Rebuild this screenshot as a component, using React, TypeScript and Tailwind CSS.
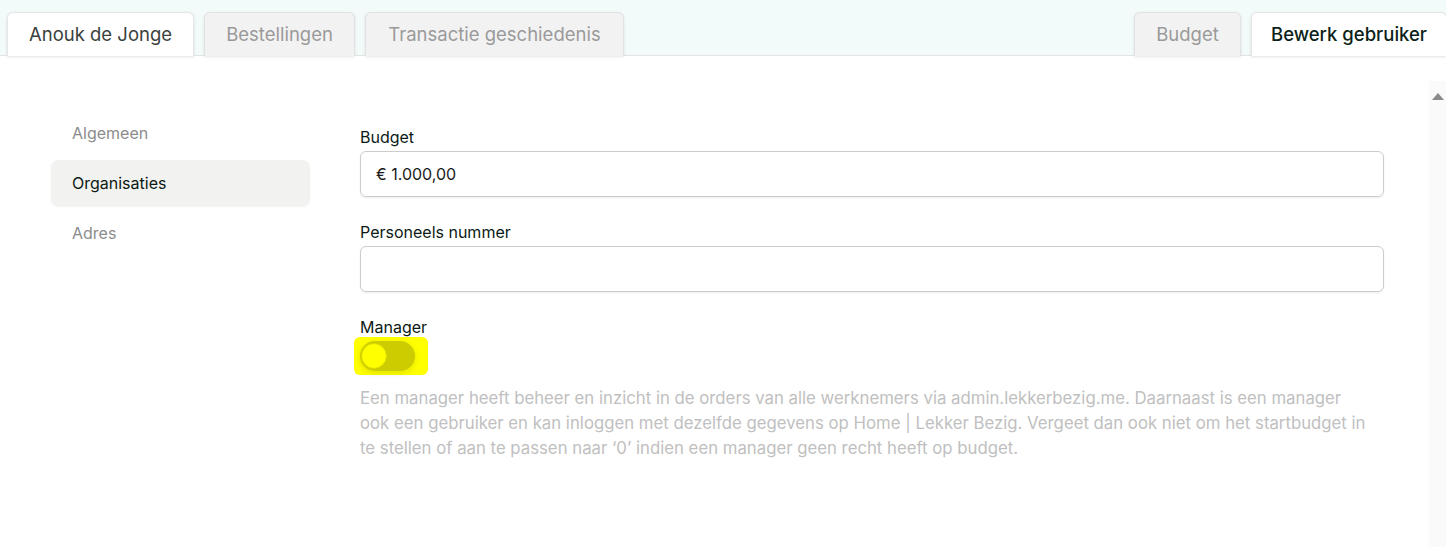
import React from "react";

const font = { fontFamily: "Inter, 'Noto Sans', sans-serif" };

function Tab({ label, active }: { label: string; active?: boolean }) {
  return (
    <div
      className={
        "h-[44px] flex items-center justify-center rounded-t-[6px] border border-b-0 text-[18.5px] -mb-px " +
        (active
          ? "bg-white border-[#e6e6e6] shadow-[0_1px_3px_rgba(0,0,0,0.12)]"
          : "bg-[#f2f2f2] border-[#e2e2e2] text-[#9a9a9a] shadow-[0_1px_3px_rgba(0,0,0,0.10)]")
      }
    >
      {label}
    </div>
  );
}

const lines = [
  "Een manager heeft beheer en inzicht in de orders van alle werknemers via admin.lekkerbezig.me. Daarnaast is een manager",
  "ook een gebruiker en kan inloggen met dezelfde gegevens op Home | Lekker Bezig. Vergeet dan ook niet om het startbudget in",
  "te stellen of aan te passen naar ‘0’ indien een manager geen recht heeft op budget.",
];

export default function App() {
  return (
    <div className="w-[1446px] h-[547px] bg-white overflow-hidden" style={font}>
      <div className="h-[56px] bg-[#f3fbfa] border-b border-[#e4e4e4] flex items-end justify-between pl-[7px]">
        <div className="flex gap-[10px]">
          <div className="w-[187px] text-[#3a3f3d]">
            <Tab label="Anouk de Jonge" active />
          </div>
          <div className="w-[151px]">
            <Tab label="Bestellingen" />
          </div>
          <div className="w-[259px]">
            <Tab label="Transactie geschiedenis" />
          </div>
        </div>
        <div className="flex gap-[10px] -mr-[1px]">
          <div className="w-[107px]">
            <Tab label="Budget" />
          </div>
          <div className="w-[196px] text-[#0c1f18] font-medium">
            <Tab label="Bewerk gebruiker" active />
          </div>
        </div>
      </div>
      <div className="flex h-[491px]">
        <div className="w-[310px] shrink-0 pl-[51px] pt-[54px] flex flex-col gap-[4px] text-[16px]">
          <div className="h-[46px] flex items-center pl-[21px] text-[#8c8c8c]">Algemeen</div>
          <div className="h-[46px] flex items-center pl-[21px] text-[#0b1a14] bg-[#f2f2f0] rounded-[8px] shadow-[0_1px_2px_rgba(0,0,0,0.06)]">
            Organisaties
          </div>
          <div className="h-[46px] flex items-center pl-[21px] text-[#8c8c8c]">Adres</div>
        </div>
        <div className="flex-1 min-w-0 pl-[50px] pr-[45px] pt-[69px]">
          <div className="text-[16px] leading-[24px] text-[#0b1a14]">Budget</div>
          <div className="mt-[2px] h-[46px] rounded-[6px] border border-[#cccccc] shadow-[0_1px_2px_rgba(0,0,0,0.08)] flex items-center pl-[15px] text-[16px] text-[#1a1a1a]">
            € 1.000,00
          </div>
          <div className="mt-[23px] text-[16px] leading-[24px] text-[#0b1a14]">Personeels nummer</div>
          <div className="mt-[2px] h-[46px] rounded-[6px] border border-[#cccccc] shadow-[0_1px_2px_rgba(0,0,0,0.08)]" />
          <div className="mt-[23px] text-[16px] leading-[24px] text-[#0b1a14]">Manager</div>
          <div className="relative mt-[2px] h-[30px] w-[55px]">
            <div className="absolute left-[-6px] top-[-4px] w-[74px] h-[38px] bg-[#ffff00] rounded-[6px]" />
            <div className="absolute inset-0 rounded-full bg-[#cccc00] shadow-[0_2px_6px_rgba(0,0,0,0.12)]">
              <div className="absolute left-[1px] top-[2px] w-[26px] h-[26px] rounded-full bg-[#ffff00] border border-[#d8d800]" />
            </div>
          </div>
          <p className="mt-[15px] text-[16.75px] leading-[25px] text-[#c0c0c0]">
            {lines.map((l, i) => (
              <span key={i} className="block whitespace-nowrap">
                {l}
              </span>
            ))}
          </p>
        </div>
        <div className="w-[17px] shrink-0 mt-[25px] bg-[#fafafa] flex justify-center pt-[12px]">
          <div className="w-0 h-0 border-l-[6px] border-r-[6px] border-b-[7px] border-l-transparent border-r-transparent border-b-[#8a8a8a]" />
        </div>
      </div>
    </div>
  );
}
